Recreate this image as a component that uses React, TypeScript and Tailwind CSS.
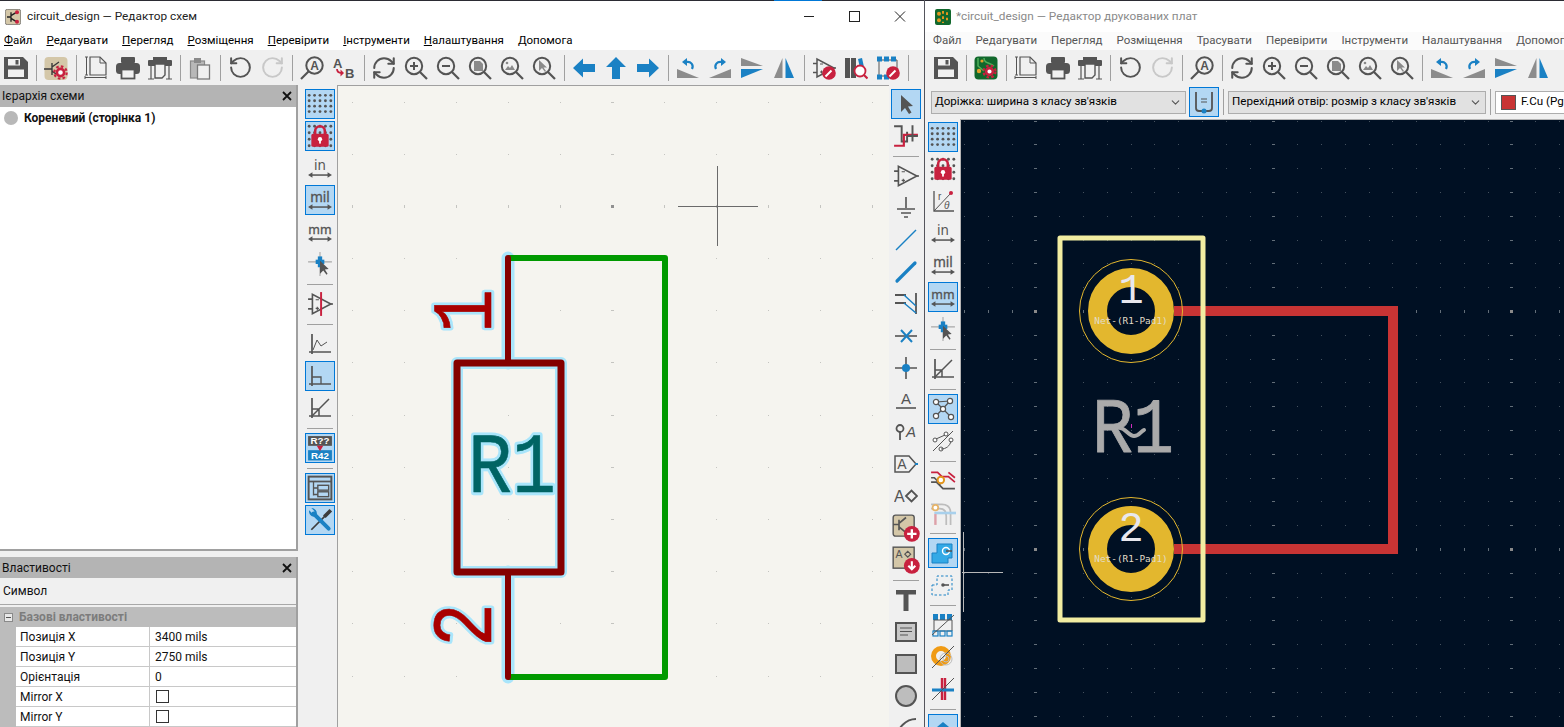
import React from 'react';
import { RotateCcw, RotateCw, RefreshCw, ChevronDown } from 'lucide-react';

const D = '#545454';
const B = '#1a81c4';
const R = '#c8213f';
const BG = '#f0f0f0';
const UI = { fontFamily: 'Liberation Sans, sans-serif' };
const STROKE_FONT = { fontFamily: 'Liberation Mono, monospace' };

const I: React.FC<{ children: React.ReactNode; s?: number }> = ({ children, s = 24 }) => (
  <svg width={s} height={s} viewBox="0 0 24 24" fill="none" className="block shrink-0">
    {children}
  </svg>
);

// toolbar bits
const T: React.FC<{ children: React.ReactNode }> = ({ children }) => (
  <div className="flex h-[32px] w-[32px] shrink-0 items-center justify-center">{children}</div>
);
const S = () => (
  <div className="flex h-[32px] w-[8px] shrink-0 items-center justify-center">
    <div className="h-[26px] w-px bg-[#a0a0a0]" />
  </div>
);
const VT: React.FC<{ children: React.ReactNode; on?: boolean }> = ({ children, on }) => (
  <div className="flex h-[32px] w-[32px] shrink-0 items-center justify-center">
    <div className={on ? 'flex h-[30px] w-[30px] items-center justify-center border border-[#0078d7] bg-[#b3d7f3]' : 'flex h-[30px] w-[30px] items-center justify-center'}>
      {children}
    </div>
  </div>
);
const VS = () => (
  <div className="flex h-[8px] w-[32px] shrink-0 items-center justify-center">
    <div className="h-px w-[26px] bg-[#a0a0a0]" />
  </div>
);

// icons
const Save = () => (
  <I>
    <path d="M0 1h19l5 5v17H0z" fill={D} />
    <path d="M4 3h12v6.500H4z" fill={BG} />
    <rect x="11.500" y="4" width="3" height="4.500" fill={D} />
    <rect x="4" y="13.500" width="16" height="7.500" fill={BG} />
  </I>
);
const SchGear = () => (
  <I>
    <rect x="0.5" y="1" width="23" height="23" rx="4" fill="#d4c7a8" />
    <path d="M0 13h8M8 7v12M8 11l7-5M8 15l4 3" stroke="#3a3a3a" strokeWidth="1.4" />
    <circle cx="16.5" cy="16.5" r="6.2" stroke={R} strokeWidth="2.2" strokeDasharray="2.6 2.2" />
    <circle cx="16.5" cy="16.5" r="3.6" stroke={R} strokeWidth="2.6" fill="#fff" />
  </I>
);
const PcbGear = () => (
  <I>
    <rect x="0.5" y="0.5" width="23" height="23" rx="4" fill="#11682c" />
    <path d="M4 2v8l6 5M10 2c0 6 6 4 10 8" stroke="#4fb05a" strokeWidth="1.5" />
    <circle cx="5" cy="15" r="2.2" fill="#e2a02a" />
    <circle cx="8" cy="5" r="1.6" fill="#e2a02a" />
    <circle cx="15.5" cy="15.5" r="6" stroke={R} strokeWidth="2.2" strokeDasharray="2.6 2.2" />
    <circle cx="15.5" cy="15.5" r="3.4" stroke={R} strokeWidth="2.6" fill="#fff" />
  </I>
);
const Page = () => (
  <I>
    <path d="M1 1h3M1 19h3M2.5 1v18M1 21.5h21M1 20v3M22 20v3" stroke={D} strokeWidth="1" />
    <path d="M6 1h10l6 6v12H6z" stroke={D} strokeWidth="1.2" />
    <path d="M16 1v6h6" stroke={D} strokeWidth="1" />
  </I>
);
const Print = () => (
  <I>
    <rect x="5" y="1" width="14" height="6" rx="1" fill={D} />
    <rect x="0" y="7" width="24" height="11" rx="3.5" fill={D} />
    <rect x="5.5" y="13.5" width="13" height="9" fill={BG} stroke={D} strokeWidth="1.8" />
  </I>
);
const Plot = () => (
  <I>
    <rect x="5" y="1" width="14" height="4" fill={D} />
    <rect x="0" y="4" width="24" height="6" rx="1" fill={D} />
    <path d="M3 10v13M21 10v13M0 23h6M18 23h6" stroke={D} strokeWidth="1.2" />
    <path d="M7 8h10v11l-3 3H7z" fill={BG} stroke={D} strokeWidth="1.4" />
  </I>
);
const Paste = () => (
  <I>
    <rect x="2.5" y="5" width="14" height="17" fill="#b8b8b8" stroke="#8a8a8a" strokeWidth="1.2" />
    <rect x="6" y="2" width="7" height="5" fill="#8a8a8a" />
    <rect x="9.5" y="9" width="12" height="14" fill={BG} stroke="#7a7a7a" strokeWidth="1.3" />
  </I>
);
const Mag: React.FC<{ children?: React.ReactNode }> = ({ children }) => (
  <I>
    <circle cx="10" cy="10" r="8.2" stroke={D} strokeWidth="2" />
    <path d="M16 16l7 7" stroke={D} strokeWidth="2.2" />
    {children}
  </I>
);
const Find = () => (
  <I>
    <circle cx="14.5" cy="9.5" r="8.2" stroke={D} strokeWidth="2" />
    <path d="M8.5 15.5L1 23" stroke={D} strokeWidth="2.2" />
    <text x="14.5" y="14" textAnchor="middle" fontSize="12" fontWeight="700" fill={D} style={UI}>A</text>
  </I>
);
const Replace = () => (
  <I>
    <text x="1" y="12" fontSize="13" fontWeight="700" fill={D} style={UI}>A</text>
    <text x="13" y="22" fontSize="13" fontWeight="700" fill={D} style={UI}>B</text>
    <path d="M5 13c0 3 2 4 5 4" stroke={R} strokeWidth="1.8" />
    <path d="M8.500 13.500l3.500 3.500-3.500 3.500z" fill={R} />
  </I>
);
const ArrowL = () => <I><polygon points="1,12 11,2.5 11,8 23,8 23,16 11,16 11,21.5" fill={B} /></I>;
const ArrowU = () => <I><polygon points="12,1 22,11 16,11 16,23 8,23 8,11 2,11" fill={B} /></I>;
const ArrowR = () => <I><polygon points="23,12 13,2.5 13,8 1,8 1,16 13,16 13,21.5" fill={B} /></I>;
const RotL = () => (
  <I>
    <polygon points="1,13 23,22 1,22" fill="#8c8c8c" />
    <path d="M16 13c2-4-1-8-6-7" stroke={B} strokeWidth="2.2" />
    <polygon points="6,6 11,2 11,10" fill={B} />
  </I>
);
const RotR = () => (
  <I>
    <polygon points="23,13 1,22 23,22" fill="#8c8c8c" />
    <path d="M8 13c-2-4 1-8 6-7" stroke={B} strokeWidth="2.2" />
    <polygon points="18,6 13,2 13,10" fill={B} />
  </I>
);
const MirV = () => (
  <I>
    <polygon points="1,2 23,10 1,10" fill="#8c8c8c" />
    <polygon points="1,13 23,13 1,22" fill={B} />
  </I>
);
const MirH = () => (
  <I>
    <polygon points="10.5,2 10.5,22 2,22" fill="#8c8c8c" />
    <polygon points="13.5,2 13.5,22 22,22" fill={B} />
  </I>
);
const Pencil = () => (
  <g>
    <circle cx="17" cy="17" r="6.8" fill={R} />
    <path d="M13.5 20.5l6-6" stroke="#fff" strokeWidth="2" />
  </g>
);
const OpAmp = () => (
  <g stroke={D} strokeWidth="1.5">
    <path d="M5 3v18L22 12z" fill="none" />
    <path d="M1 7.5h4M1 16.5h4M22 12h2" />
    <path d="M8 8h3M8 16h3M9.5 14.5v3" strokeWidth="1" />
  </g>
);
const SymEdit = () => <I><OpAmp /><Pencil /></I>;
const SymPlain = () => <I s={26}><OpAmp /></I>;
const LibBrowse = () => (
  <I>
    <rect x="1" y="2" width="5" height="20" fill={D} />
    <rect x="7" y="2" width="5" height="20" fill={D} />
    <path d="M14 3l4-1 2 9-4 1z" fill={B} />
    <circle cx="16" cy="15" r="5.5" fill="#fff" stroke={R} strokeWidth="1.8" />
    <path d="M20 19l3.5 3.5" stroke={R} strokeWidth="2.2" />
  </I>
);
const FpEdit = () => (
  <I>
    <path d="M3 4h18v16H3z" stroke={D} strokeWidth="1" />
    {[1, 8, 15].map((x) => <rect key={x} x={x} y="0.5" width="5" height="5" fill={B} />)}
    {[1, 8].map((x) => <rect key={x} x={x} y="18.5" width="5" height="5" fill={B} />)}
    <Pencil />
  </I>
);
const Dots = () => (
  <I s={26}>
    {[4, 9, 14, 19].map((y) => [2, 7, 12, 17, 22].map((x) => <circle key={x + '-' + y} cx={x} cy={y} r="1.3" fill={D} />))}
  </I>
);
const Lock = () => (
  <I s={26}>
    {[3, 9, 15, 21].map((y) => [2, 7, 12, 17, 22].map((x) => <circle key={x + '-' + y} cx={x} cy={y} r="1.3" fill={D} />))}
    <path d="M7.5 11V7.5a4.5 4.5 0 0 1 9 0V11" stroke={R} strokeWidth="2.4" />
    <rect x="4" y="10" width="16" height="12" rx="1.5" fill={R} />
    <circle cx="12" cy="15" r="2" fill="#fff" />
    <rect x="11.2" y="15" width="1.6" height="4" fill="#fff" />
  </I>
);
const Unit: React.FC<{ t: string }> = ({ t }) => (
  <I s={26}>
    <text x="12" y="13.500" textAnchor="middle" fontSize={t === 'mm' ? 11.500 : 12.500} fill={D} stroke={D} strokeWidth={t === 'in' ? 0 : 0.300} style={{ fontFamily: 'Noto Sans, sans-serif' }}>{t}</text>
    <path d="M3 18.500h18" stroke={D} strokeWidth="1.400" />
    <polygon points="1,18.500 5,16 5,21" fill={D} />
    <polygon points="23,18.500 19,16 19,21" fill={D} />
  </I>
);
const CursorCross = () => (
  <I s={26}>
    <path d="M12 1v22M1 10h22" stroke="#a8a8a8" strokeWidth="1" />
    <rect x="8" y="8" width="8" height="4" fill={B} />
    <rect x="10" y="5" width="4" height="10" fill={B} />
    <polygon points="12,9 12,21 15,18 18,22 19,21 16.5,17 20,16.500" fill={D} />
  </I>
);
const SymRed = () => (
  <I s={26}>
    <OpAmp />
    <path d="M13 1v22" stroke={R} strokeWidth="1.8" />
  </I>
);
const AxisBase = () => <path d="M4 2v20M1 20h22" stroke={D} strokeWidth="1.7" />;
const Graph = () => <I><AxisBase /><path d="M5 18l4-10 4 6 6-4" stroke={D} strokeWidth="1" /></I>;
const Ortho = () => <I><AxisBase /><path d="M4 13h9v7" stroke={D} strokeWidth="1.3" /></I>;
const Angle = () => <I><AxisBase /><path d="M4 20L21 3M4 13h7v7" stroke={D} strokeWidth="1.5" /></I>;
const Polar = () => (
  <I>
    <path d="M3 2v20h20" stroke={D} strokeWidth="1.3" />
    <path d="M3 22L20 4" stroke={D} strokeWidth="1" />
    <circle cx="20" cy="4" r="2" fill={R} />
    <text x="7" y="11" fontSize="10" fill={D} style={UI}>r</text>
    <text x="13" y="20" fontSize="10" fontStyle="italic" fill={D} style={UI}>θ</text>
  </I>
);
const Annotate = () => (
  <I s={26}>
    <rect x="1" y="1" width="22" height="9" fill={D} />
    <text x="12" y="8.5" textAnchor="middle" fontSize="9" fontWeight="700" fill="#fff" style={UI}>R??</text>
    <rect x="1" y="14" width="22" height="9.5" fill={B} />
    <text x="12" y="22.500" textAnchor="middle" fontSize="9" fontWeight="700" fill="#fff" style={UI}>R42</text>
    <polygon points="9,10 15,10 12,15" fill={R} />
  </I>
);
const Hier = () => (
  <I s={26}>
    <rect x="1.5" y="1.5" width="21" height="21" stroke={D} strokeWidth="1.8" />
    <path d="M1.5 6h21" stroke={D} strokeWidth="1.6" />
    <path d="M6 6v13M6 12h4M6 18h4" stroke={D} strokeWidth="1.2" />
    <rect x="10" y="9.5" width="10" height="4.5" stroke={D} strokeWidth="1.3" />
    <rect x="10" y="15.5" width="10" height="4.5" stroke={D} strokeWidth="1.3" />
  </I>
);
const Tools = () => (
  <I s={26}>
    <path d="M4 21L20 5" stroke="#3c3c3c" strokeWidth="1.6" />
    <path d="M16 9l6-6" stroke="#3c3c3c" strokeWidth="3.4" />
    <path d="M6 6l14 14" stroke={B} strokeWidth="3.6" strokeLinecap="round" />
    <path d="M2 3l3 3 2-2-3-3a5 5 0 0 1 5 6L6 9A5 5 0 0 1 2 3z" fill={B} />
  </I>
);
const Arrow = () => <I><polygon points="7,3 7,20 11,16 15,22 17.5,20.5 14,14.5 19,14" fill={D} /></I>;
const WireBus = () => (
  <I s={26}>
    <path d="M1 3h7v14h5V8" stroke={D} strokeWidth="1.8" />
    <path d="M1 21h9V11h13" stroke={R} strokeWidth="2" />
    <path d="M18 2v15M13 12h10" stroke={D} strokeWidth="1.8" />
  </I>
);
const Power = () => <I><path d="M12 1v11M3 13h18M7 17h10M10 21h4" stroke={D} strokeWidth="1.6" /></I>;
const Line = () => <I><path d="M2 22L22 2" stroke={B} strokeWidth="1.5" /></I>;
const Bus = () => <I><path d="M3 21L21 3" stroke={B} strokeWidth="3.2" strokeLinecap="round" /></I>;
const BusEntry = () => (
  <I>
    <path d="M22 1v21" stroke={D} strokeWidth="1.8" />
    <path d="M1 3h11M1 11h11" stroke={D} strokeWidth="1.8" />
    <path d="M10 3l12 11M10 11l12 10" stroke={B} strokeWidth="1.5" />
  </I>
);
const NoConn = () => <I><path d="M1 12h22" stroke={D} strokeWidth="1.6" /><path d="M7 6l11 12M18 6L7 18" stroke={B} strokeWidth="2" /></I>;
const Junction = () => <I><path d="M12 1v22M1 12h22" stroke={D} strokeWidth="1.6" /><circle cx="12" cy="12" r="4" fill={B} /></I>;
const ALine = () => (
  <I>
    <text x="12" y="16" textAnchor="middle" fontSize="15" fill={D} style={UI}>A</text>
    <path d="M2 20h20" stroke={D} strokeWidth="1.6" />
  </I>
);
const PinLabel = () => (
  <I>
    <circle cx="6" cy="8.5" r="3.5" stroke={D} strokeWidth="1.8" />
    <path d="M6 12v8" stroke={D} strokeWidth="1.8" />
    <text x="12" y="17" fontSize="15" fontStyle="italic" fill={D} style={UI}>A</text>
  </I>
);
const GlobalLabel = () => (
  <I>
    <path d="M1 4h14l7 8-7 8H1z" stroke={D} strokeWidth="1.5" />
    <text x="8" y="17" textAnchor="middle" fontSize="14" fill={D} style={UI}>A</text>
    <path d="M21 12h3" stroke={B} strokeWidth="2" />
  </I>
);
const ADia = () => (
  <I>
    <text x="0" y="18" fontSize="16" fill={D} style={UI}>A</text>
    <path d="M12 12l5.5-5.5L23 12l-5.500 5.500z" stroke={D} strokeWidth="1.8" />
  </I>
);
const SheetAdd = () => (
  <I s={28}>
    <rect x="1" y="1" width="18" height="18" rx="2" fill="#d4c7a8" stroke={D} strokeWidth="1.2" />
    <path d="M1 9h5M6 5v9M6 8l6-5M6 11l6 5" stroke={D} strokeWidth="1.4" />
    <circle cx="17" cy="17" r="6.8" fill={R} />
    <path d="M17 13v8M13 17h8" stroke="#fff" strokeWidth="2" />
  </I>
);
const SheetImp = () => (
  <I s={28}>
    <rect x="1" y="1" width="18" height="18" fill="#d4c7a8" stroke={D} strokeWidth="1.2" />
    <text x="3" y="10" fontSize="9" fill={D} style={UI}>A</text>
    <path d="M11 7l2.500-2.500L16 7l-2.500 2.500z" stroke={D} strokeWidth="1" />
    <circle cx="17" cy="17" r="6.8" fill={R} />
    <path d="M17 13v6M14 17l3 3 3-3" stroke="#fff" strokeWidth="1.8" />
  </I>
);
const BigT = () => <I><path d="M2 2h20v4.500h-7.500V23h-5V6.500H2z" fill={D} /></I>;
const TextBox = () => (
  <I>
    <rect x="2" y="3" width="20" height="18" fill="#c8c8c8" stroke={D} strokeWidth="2" />
    <path d="M6 8h12M6 11.500h12M6 15h8" stroke={D} strokeWidth="1" />
  </I>
);
const Rect = () => <I><rect x="2" y="3" width="20" height="18" fill="#bdbdbd" stroke={D} strokeWidth="2" /></I>;
const Circ = () => <I><circle cx="12" cy="12" r="10" fill="#bdbdbd" stroke={D} strokeWidth="2" /></I>;
const Arc = () => <I><path d="M3 22C3 12 12 3 22 3" stroke={D} strokeWidth="2" /></I>;
const Ratsnest = () => (
  <I>
    <path d="M5 5l15 15M19 4L5 19M5 5l14-1" stroke={D} strokeWidth="1.2" />
    {[[5, 5], [19, 4], [5, 19], [20, 20], [12, 12]].map(([x, y]) => <circle key={x + '-' + y} cx={x} cy={y} r="2.6" fill="#fff" stroke={D} strokeWidth="1.2" />)}
  </I>
);
const Curved = () => (
  <I>
    <path d="M2 22L22 2" stroke={D} strokeWidth="1" />
    <circle cx="4" cy="11" r="2" fill="#fff" stroke={D} />
    <circle cx="15" cy="5" r="2" fill="#fff" stroke={D} />
    <circle cx="20" cy="11" r="2" fill="#fff" stroke={D} />
    <circle cx="10" cy="20" r="2" fill="#fff" stroke={D} />
    <path d="M5 10l9-4M10 20c5 0 9-3 10-8" stroke={D} strokeWidth="1" />
  </I>
);
const Tracks = () => (
  <I s={26}>
    <path d="M1 4h6l4 4h6l6 5M17 4l6 5" stroke={R} strokeWidth="1.600" />
    <path d="M1 13h5l6 6h11M1 9h3l6 6" stroke={D} strokeWidth="1.600" />
    <circle cx="10" cy="11" r="3" fill="#fff" stroke="#e2961e" strokeWidth="1.800" />
  </I>
);
const TracksDim = () => (
  <I s={26}>
    <path d="M1 4h10c6 0 8 4 8 8v11M1 8h8c4 0 6 3 6 7v8" stroke="#bdbdbd" strokeWidth="1.600" />
    <path d="M4 12h20" stroke="#a8d0ec" strokeWidth="2.400" />
    <path d="M5 13v10" stroke="#dda0a8" strokeWidth="2.200" />
    <circle cx="5" cy="7" r="2.600" fill="#fff" stroke="#e6b46a" strokeWidth="1.600" />
  </I>
);
const PadFill = () => (
  <I s={24}>
    <path d="M1 12h5V3h15v14h-4v5H1z" fill="#33a9e6" stroke={B} strokeWidth="1" />
    <circle cx="15" cy="10" r="3.500" stroke="#fff" strokeWidth="1.400" fill="#33a9e6" />
    <path d="M15 10h6" stroke={D} strokeWidth="1.600" />
  </I>
);
const PadDash = () => (
  <I>
    <path d="M1 12h5V3h15v14h-4v5H1z" stroke={B} strokeWidth="1" strokeDasharray="2.500 2" />
    <path d="M12 12h6" stroke={D} strokeWidth="1.600" />
    <circle cx="12" cy="12" r="1.800" fill={D} />
  </I>
);
const FpCross = () => (
  <I>
    {[2, 9, 16].map((x) => <rect key={x} x={x} y="1" width="5" height="6" fill={B} />)}
    <path d="M3 7h18v11H3z" stroke={D} strokeWidth="1" />
    {[2, 9, 16].map((x) => <rect key={x} x={x} y="18" width="5" height="5" stroke={B} strokeWidth="1.200" />)}
    <path d="M1 22L23 2" stroke={D} strokeWidth="1" />
  </I>
);
const ViaCross = () => (
  <I>
    <circle cx="10" cy="11" r="7.500" stroke="#f09b14" strokeWidth="5" />
    <circle cx="15" cy="14" r="6" stroke="#bcbcbc" strokeWidth="1" />
    <circle cx="15" cy="14" r="3" stroke="#bcbcbc" strokeWidth="1" />
    <path d="M1 23L23 1" stroke={D} strokeWidth="1" />
  </I>
);
const TrackCross = () => (
  <I>
    <path d="M11 1v22M14 1v22" stroke={R} strokeWidth="2.400" />
    <path d="M1 13h22" stroke={B} strokeWidth="3" />
    <path d="M1 23L23 1" stroke={D} strokeWidth="1" />
  </I>
);

const MenuBar: React.FC<{ items: string[]; active?: boolean }> = ({ items, active }) => (
  <div className={active ? 'flex h-[18px] items-center gap-[14px] bg-white pl-[4px] text-[11.5px] text-black' : 'flex h-[18px] items-center gap-[14px] bg-[#fbfbfb] pl-[8px] text-[11.5px] text-[#555]'}>
    {items.map((m) => (
      <span key={m} className="shrink-0 whitespace-nowrap">
        {active ? <><u>{m[0]}</u>{m.slice(1)}</> : m}
      </span>
    ))}
  </div>
);

const DockHead: React.FC<{ title: string; h: string }> = ({ title, h }) => (
  <div className={'flex shrink-0 items-center justify-between bg-[#b4b4b4] pl-[2px] pr-[3px] text-[12px] text-[#111] ' + h}>
    <span>{title}</span>
    <svg width="10" height="10" viewBox="0 0 10 10" className="mr-[1px]"><path d="M1 1l8 8M9 1L1 9" stroke="#111" strokeWidth="1.8" /></svg>
  </div>
);

const PropRow: React.FC<{ label: string; value?: string }> = ({ label, value }) => (
  <div className="grid h-[20px] shrink-0 grid-cols-[16px_134px_1fr] text-[12px] text-[#111]">
    <div className="bg-[#bcbcbc]" />
    <div className="flex items-center border-b border-r border-[#c8c8c8] bg-white pl-[4px]">{label}</div>
    <div className="flex items-center border-b border-[#c8c8c8] bg-white pl-[5px]">
      {value !== undefined ? value : <span className="ml-[1px] block h-[13px] w-[13px] border border-[#333] bg-white" />}
    </div>
  </div>
);

const Select: React.FC<{ w: string; text: string }> = ({ w, text }) => (
  <div className={'flex h-[23px] shrink-0 items-center justify-between border border-[#adadad] bg-[#e1e1e1] pl-[3px] pr-[3px] text-[11.6px] text-black ' + w}>
    <span className="whitespace-nowrap">{text}</span>
    <ChevronDown size={13} color="#555" />
  </div>
);

const schX = [352, 404, 456, 508, 560, 612, 664, 716, 768, 820, 872];
const schY = [101, 153, 205, 257, 309, 361, 414, 466, 518, 570, 622, 675];

const SchematicCanvas = () => (
  <svg width="551" height="642" viewBox="338 85 551 642" className="block">
    {schY.map((y) => schX.map((x) => {
      const mx = x === 612;
      const my = y === 205;
      return (
        <rect key={x + '-' + y} x={mx ? x - 1 : x} y={my ? y - 1 : y} width={mx ? 3 : 1} height={my ? 3 : 1} fill={mx && my ? '#909090' : '#c4c4c0'} />
      );
    }))}
    <path d="M717.500 165v80M678 205.500h80" stroke="#6a6a6a" strokeWidth="1" />

    {/* halo */}
    <g stroke="#a9e5fb" strokeWidth="13" strokeLinecap="round" strokeLinejoin="round" fill="none">
      <path d="M508 257v105M508 571v105" />
      <path d="M457 362h104v209H457z" strokeWidth="12" />
    </g>
    <path d="M508 257h157v419H508" stroke="#009900" strokeWidth="6" fill="none" strokeLinejoin="round" />
    <path d="M508 257v105M508 571v105" stroke="#840000" strokeWidth="6" strokeLinecap="round" fill="none" />
    <path d="M457 362h104v209H457z" stroke="#840000" strokeWidth="7" fill="none" strokeLinejoin="round" />

    {/* ref and pin numbers: plain text with a halo */}
    <g style={STROKE_FONT} textAnchor="middle" strokeLinejoin="round" strokeLinecap="round">
      <text x="512" y="491" fontSize="86" textLength="88" lengthAdjust="spacingAndGlyphs" fill="#a9e5fb" stroke="#a9e5fb" strokeWidth="6.500">R1</text>
      <text x="512" y="491" fontSize="86" textLength="88" lengthAdjust="spacingAndGlyphs" fill="#006464" stroke="#006464" strokeWidth="0.600">R1</text>
      <g transform="rotate(-90 491 310)">
        <text x="491" y="310" fontSize="86" textLength="44" lengthAdjust="spacingAndGlyphs" fill="#a9e5fb" stroke="#a9e5fb" strokeWidth="6.500">1</text>
        <text x="491" y="310" fontSize="86" textLength="44" lengthAdjust="spacingAndGlyphs" fill="#a90000" stroke="#a90000" strokeWidth="0.600">1</text>
      </g>
      <g transform="rotate(-90 491 624)">
        <text x="491" y="624" fontSize="86" textLength="44" lengthAdjust="spacingAndGlyphs" fill="#a9e5fb" stroke="#a9e5fb" strokeWidth="6.500">2</text>
        <text x="491" y="624" fontSize="86" textLength="44" lengthAdjust="spacingAndGlyphs" fill="#a90000" stroke="#a90000" strokeWidth="0.600">2</text>
      </g>
    </g>
  </svg>
);

const pcbCols = Array.from({ length: 26 }, (_, i) => i);
const pcbRows = Array.from({ length: 26 }, (_, i) => i);

const PcbPad: React.FC<{ y: number; n: string; net: string }> = ({ y, n, net }) => (
  <g textAnchor="middle">
    <circle cx="1131" cy={y} r="51.500" stroke="#e3b72e" strokeWidth="1" fill="none" />
    <circle cx="1131" cy={y} r="33.500" stroke="#e3b72e" strokeWidth="19" fill="#001023" />
    <text x="1131" y={y - 8} fontSize="42" fill="#e8e8ee" style={STROKE_FONT}>{n}</text>
    <text x="1131" y={y + 13} fontSize="9.400" fill="#e2dcc8" style={{ fontFamily: 'DejaVu Sans Mono, monospace' }}>{net}</text>
  </g>
);

const PcbCanvas = () => (
  <svg width="603" height="607" viewBox="961 120 603 607" className="block">
    {pcbRows.map((j) => pcbCols.map((i) => {
      const mx = i % 10 === 3;
      const my = j % 10 === 8;
      const x = Math.round(964 + i * 23.800);
      const y = Math.round(120.500 + j * 23.800);
      return (
        <rect key={i + '-' + j} x={mx ? x - 1 : x} y={my ? y - 1 : y} width={mx ? 3 : 1} height={my ? 3 : 1} fill={mx && my ? '#8a8a8a' : mx || my ? '#626e78' : '#44515e'} />
      );
    }))}
    <path d="M1174 311h219v238h-219" stroke="#c83434" strokeWidth="10" fill="none" />
    <rect x="1060" y="238" width="143" height="382" stroke="#f2eda1" strokeWidth="5" fill="none" strokeLinejoin="round" />
    <PcbPad y={311} n="1" net="Net-(R1-Pad1)" />
    <PcbPad y={549} n="2" net="Net-(R1-Pad1)" />
    <text x="1133" y="452" textAnchor="middle" fontSize="78" textLength="82" lengthAdjust="spacingAndGlyphs" fill="#aaaaaa" stroke="#aaaaaa" strokeWidth="0.800" strokeLinejoin="round" style={STROKE_FONT}>R1</text>
    <path d="M1120 428c5 0 9 8 14 8s6-4 10-6" stroke="#aaaaaa" strokeWidth="4" fill="none" strokeLinecap="round" />
    <path d="M1131.500 424v4" stroke="#d02cc0" strokeWidth="1" />
    <path d="M963.500 532v80M962 572.500h41" stroke="#b8b8b8" strokeWidth="1" />
  </svg>
);

export default function App() {
  return (
    <div className="flex h-[727px] w-[1564px] overflow-hidden bg-[#f0f0f0]" style={{ fontFamily: 'Roboto, sans-serif' }}>
      {/* schematic window */}
      <div className="relative flex h-full w-[925px] shrink-0 flex-col border-r border-[#55555c]">
        <div className="absolute left-[774px] top-0 h-px w-[48px] bg-[#0078d7]" />
        <div className="flex h-[32px] shrink-0 items-center border-t border-[#2b2b33] bg-white text-[11.8px] text-[#222]">
          <div className="ml-[5px] mr-[6px]">
            <I s={16}>
              <rect x="0.5" y="0.5" width="23" height="23" rx="3" fill="#d4c7a8" stroke="#555" />
              <path d="M3 12h6M9 5v14M9 10l8-5M9 14l8 5" stroke="#222" strokeWidth="2" />
              <circle cx="18" cy="5" r="3" fill={R} />
              <circle cx="18" cy="19" r="3" fill={R} />
            </I>
          </div>
          <span>circuit_design — Редактор схем</span>
          <div className="ml-auto flex items-center">
            <svg width="102" height="12" viewBox="0 0 102 12" className="mr-[18px] block">
              <path d="M0 5.500h10" stroke="#222" />
              <rect x="45.500" y="0.500" width="10" height="10" stroke="#222" fill="none" />
              <path d="M91 .5l10 10M101 .5l-10 10" stroke="#222" />
            </svg>
          </div>
        </div>
        <MenuBar active items={['Файл', 'Редагувати', 'Перегляд', 'Розміщення', 'Перевірити', 'Інструменти', 'Налаштування', 'Допомога']} />
        <div className="flex h-[35px] shrink-0 items-center bg-[#f0f0f0]">
          <T><Save /></T><S />
          <T><SchGear /></T><S />
          <T><Page /></T><T><Print /></T><T><Plot /></T><S />
          <T><Paste /></T><S />
          <T><RotateCcw size={25} color={D} strokeWidth={1.9} /></T>
          <T><RotateCw size={25} color="#c8c8c8" strokeWidth={1.9} /></T><S />
          <T><Find /></T><T><Replace /></T><S />
          <T><RefreshCw size={26} color={D} strokeWidth={1.9} /></T>
          <T><Mag><path d="M6 10h8M10 6v8" stroke={D} strokeWidth="2" /></Mag></T>
          <T><Mag><path d="M6 10h8" stroke={D} strokeWidth="2" /></Mag></T>
          <T><Mag><path d="M6 5h6l3 3v7H6z" fill="#8a8a8a" /></Mag></T>
          <T><Mag><path d="M5 14l3-4 2 2 2-3 3 5z" fill="#8a8a8a" /><circle cx="7" cy="7" r="1.300" fill="#8a8a8a" /></Mag></T>
          <T><Mag><path d="M7 4v11l3-3 3 4 1-1-2.500-3.500H15z" fill="#8a8a8a" /></Mag></T><S />
          <T><ArrowL /></T><T><ArrowU /></T><T><ArrowR /></T><S />
          <T><RotL /></T><T><RotR /></T><T><MirV /></T><T><MirH /></T><S />
          <T><SymEdit /></T><T><LibBrowse /></T><T><FpEdit /></T><S />
        </div>
        <div className="flex min-h-0 flex-1">
          {/* docks */}
          <div className="flex h-full w-[298px] shrink-0 flex-col">
            <div className="flex h-[466px] shrink-0 flex-col border-b-2 border-r-2 border-[#a0a0a0] bg-white">
              <DockHead title="Ієрархія схеми" h="h-[22px]" />
              <div className="flex h-[22px] items-center pl-[4px] text-[12px] font-bold text-[#111]">
                <span className="mr-[6px] block h-[14px] w-[14px] rounded-full bg-[#b8b8b8]" />
                Кореневий (сторінка 1)
              </div>
            </div>
            <div className="h-[6px] shrink-0" />
            <div className="flex min-h-0 flex-1 flex-col border-r-2 border-[#a0a0a0]">
              <DockHead title="Властивості" h="h-[21px]" />
              <div className="flex h-[27px] shrink-0 items-center border-b border-[#a8a8a8] pl-[3px] text-[12px] text-[#111]">Символ</div>
              <div className="h-[2px] shrink-0" />
              <div className="flex h-[20px] shrink-0 items-center bg-[#bcbcbc] pl-[4px] text-[12px] font-bold text-[#7c7c7c]">
                <span className="mr-[6px] flex h-[9px] w-[9px] items-center justify-center border border-[#8a8a8a] bg-[#e8e8e8]">
                  <span className="block h-px w-[5px] bg-[#555]" />
                </span>
                Базові властивості
              </div>
              <PropRow label="Позиція X" value="3400 mils" />
              <PropRow label="Позиція Y" value="2750 mils" />
              <PropRow label="Орієнтація" value="0" />
              <PropRow label="Mirror X" />
              <PropRow label="Mirror Y" />
            </div>
          </div>
          {/* left rail */}
          <div className="flex h-full w-[39px] shrink-0 flex-col pl-[6px] pt-[3px]">
            <VT on><Dots /></VT>
            <VT on><Lock /></VT>
            <VT><Unit t="in" /></VT>
            <VT on><Unit t="mil" /></VT>
            <VT><Unit t="mm" /></VT>
            <VT><CursorCross /></VT>
            <VS />
            <VT><SymRed /></VT>
            <VS />
            <VT><Graph /></VT>
            <VT on><Ortho /></VT>
            <VT><Angle /></VT>
            <VS />
            <VT on><Annotate /></VT>
            <VS />
            <VT on><Hier /></VT>
            <VT on><Tools /></VT>
          </div>
          {/* canvas */}
          <div className="h-full w-[552px] shrink-0 overflow-hidden border-l border-t border-[#a0a0a0] bg-[#f5f4ef]">
            <SchematicCanvas />
          </div>
          {/* right rail */}
          <div className="flex h-full min-w-0 flex-1 flex-col overflow-hidden pl-px pt-[3px]">
            <VT on><Arrow /></VT>
            <VT><WireBus /></VT>
            <VS />
            <VT><SymPlain /></VT>
            <VT><Power /></VT>
            <VT><Line /></VT>
            <VT><Bus /></VT>
            <VT><BusEntry /></VT>
            <VT><NoConn /></VT>
            <VT><Junction /></VT>
            <VT><ALine /></VT>
            <VT><PinLabel /></VT>
            <VT><GlobalLabel /></VT>
            <VT><ADia /></VT>
            <VT><SheetAdd /></VT>
            <VT><SheetImp /></VT>
            <VS />
            <VT><BigT /></VT>
            <VT><TextBox /></VT>
            <VT><Rect /></VT>
            <VT><Circ /></VT>
            <VT><Arc /></VT>
          </div>
        </div>
      </div>

      {/* pcb window */}
      <div className="flex h-full min-w-0 flex-1 flex-col overflow-hidden">
        <div className="flex h-[32px] shrink-0 items-center border-t border-[#2b2b33] bg-white pl-[10px] text-[11.8px] text-[#8a8a8a]">
          <div className="mr-[5px]">
            <I s={16}>
              <rect x="0" y="0" width="24" height="24" rx="3" fill="#11682c" />
              <circle cx="6" cy="7" r="3" fill="#e2961e" />
              <circle cx="6" cy="17" r="3" fill="#e2961e" />
              <path d="M12 3v18M18 5v14" stroke="#e2961e" strokeWidth="3" strokeDasharray="4 4" />
            </I>
          </div>
          <span className="whitespace-nowrap">*circuit_design — Редактор друкованих плат</span>
        </div>
        <MenuBar items={['Файл', 'Редагувати', 'Перегляд', 'Розміщення', 'Трасувати', 'Перевірити', 'Інструменти', 'Налаштування', 'Допомога']} />
        <div className="flex h-[35px] shrink-0 items-center bg-[#f0f0f0] pl-[5px]">
          <T><Save /></T><S />
          <T><PcbGear /></T><S />
          <T><Page /></T><T><Print /></T><T><Plot /></T><S />
          <T><RotateCcw size={25} color={D} strokeWidth={1.9} /></T>
          <T><RotateCw size={25} color="#c8c8c8" strokeWidth={1.9} /></T><S />
          <T><Find /></T><S />
          <T><RefreshCw size={26} color={D} strokeWidth={1.9} /></T>
          <T><Mag><path d="M6 10h8M10 6v8" stroke={D} strokeWidth="2" /></Mag></T>
          <T><Mag><path d="M6 10h8" stroke={D} strokeWidth="2" /></Mag></T>
          <T><Mag><path d="M6 5h6l3 3v7H6z" fill="#8a8a8a" /></Mag></T>
          <T><Mag><path d="M5 14l3-4 2 2 2-3 3 5z" fill="#8a8a8a" /><circle cx="7" cy="7" r="1.300" fill="#8a8a8a" /></Mag></T>
          <T><Mag><path d="M7 4v11l3-3 3 4 1-1-2.500-3.500H15z" fill="#8a8a8a" /></Mag></T><S />
          <T><RotL /></T><T><RotR /></T><T><MirV /></T><T><MirH /></T>
        </div>
        <div className="flex h-[34px] shrink-0 items-center bg-[#f0f0f0] pl-[6px]">
          <Select w="w-[255px]" text="Доріжка: ширина з класу зв'язків" />
          <div className="ml-[3px] flex h-[30px] w-[30px] shrink-0 items-center justify-center border border-[#0078d7] bg-[#b3d7f3]">
            <I>
              <path d="M4 2v16a3 3 0 0 0 3 3h10a3 3 0 0 0 3-3V2" stroke={D} strokeWidth="1.8" />
              <path d="M9 9h6M9 12h6" stroke={D} strokeWidth="1.200" />
              <circle cx="12" cy="21" r="2.500" fill={B} />
            </I>
          </div>
          <div className="mx-[4px] h-[26px] w-px shrink-0 bg-[#a0a0a0]" />
          <Select w="w-[258px]" text="Перехідний отвір: розмір з класу зв'язків" />
          <div className="mx-[4px] h-[26px] w-px shrink-0 bg-[#a0a0a0]" />
          <div className="flex h-[23px] w-[90px] shrink-0 items-center border border-[#adadad] bg-white pl-[5px] text-[11.6px] text-black">
            <span className="mr-[5px] block h-[15px] w-[15px] shrink-0 border border-[#555] bg-[#c83434]" />
            <span className="whitespace-nowrap">F.Cu (Pg</span>
          </div>
        </div>
        <div className="flex min-h-0 flex-1">
          <div className="flex h-full w-[35px] shrink-0 flex-col pl-[2px] pt-[2px]">
            <VT on><Dots /></VT>
            <VT><Lock /></VT>
            <VT><Polar /></VT>
            <VT><Unit t="in" /></VT>
            <VT><Unit t="mil" /></VT>
            <VT on><Unit t="mm" /></VT>
            <VT><CursorCross /></VT>
            <VS />
            <VT><Angle /></VT>
            <VS />
            <VT on><Ratsnest /></VT>
            <VT><Curved /></VT>
            <VS />
            <VT><Tracks /></VT>
            <VT><TracksDim /></VT>
            <VS />
            <VT on><PadFill /></VT>
            <VT><PadDash /></VT>
            <VS />
            <VT><FpCross /></VT>
            <VT><ViaCross /></VT>
            <VT><TrackCross /></VT>
            <VS />
            <VT on><I><polygon points="12,5 24,15 0,15" fill={B} /></I></VT>
          </div>
          <div className="h-full min-w-0 flex-1 overflow-hidden border-l border-t border-[#b4b4b4] bg-[#001023]">
            <PcbCanvas />
          </div>
        </div>
      </div>
    </div>
  );
}
